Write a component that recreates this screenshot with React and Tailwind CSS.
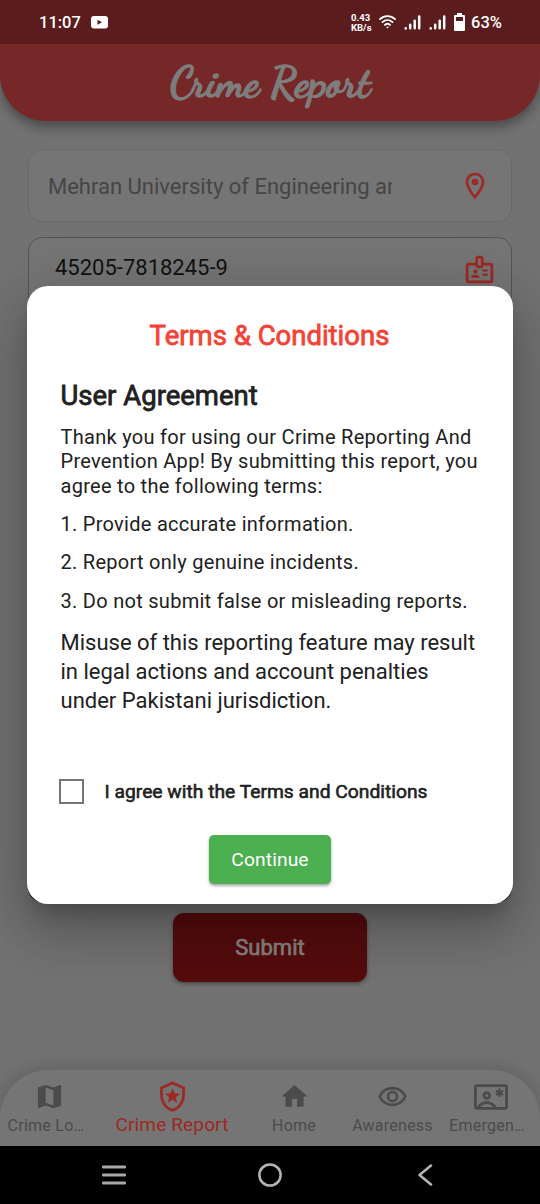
import React from "react";
import {
  MdMap,
  MdOutlineLocalPolice,
  MdHome,
  MdOutlineRemoveRedEye,
  MdOutlineContactEmergency,
  MdOutlineBadge,
  MdOutlineLocationOn,
} from "react-icons/md";

function Signal() {
  return (
    <svg width="17" height="15" viewBox="0 0 17 15" fill="none" stroke="white" strokeWidth="2.5" strokeLinecap="round">
      <path d="M1.7 13.3v.2M6.2 9.8v3.5M10.7 5.8v7.5M15.2 1.5v11.8" />
    </svg>
  );
}

function StatusBar() {
  return (
    <div className="flex h-11 shrink-0 items-center bg-[#5a1c1c] pl-[39px] pr-[38px] text-white">
      <span className="mt-[2px] w-[42px] whitespace-nowrap text-[16.5px] font-medium leading-5">11:07</span>
      <svg className="ml-[10px]" width="17" height="13" viewBox="0 0 17 13">
        <rect width="17" height="12.5" rx="3" fill="white" />
        <path d="M6.5 3.8v5l4.6-2.5z" fill="#5a1c1c" />
      </svg>
      <div className="ml-auto flex items-center">
        <div className="mt-[1px] w-[19px] whitespace-nowrap text-left text-[9.5px] font-bold leading-[10px]">
          <div>0.43</div>
          <div>KB/s</div>
        </div>
        <svg className="ml-[9px]" width="17" height="14" viewBox="0 0 17 14" fill="none" stroke="white" strokeWidth="1.9" strokeLinecap="round">
          <path d="M1 4.1C5.3.1 11.7.1 16 4.1M3.5 7.1c2.9-2.6 7.1-2.6 10 0M6 9.9c1.5-1.3 3.5-1.3 5 0" />
          <path d="M7 11.8h3L8.5 13.5z" fill="white" stroke="none" />
        </svg>
        <span className="ml-[8px]"><Signal /></span>
        <span className="ml-[8px]"><Signal /></span>
        <svg className="ml-[8px]" width="11" height="18" viewBox="0 0 11 18">
          <path fill="white" fillRule="evenodd" d="M3 0h5v2h2a1 1 0 0 1 1 1v14a1 1 0 0 1-1 1H1a1 1 0 0 1-1-1V3a1 1 0 0 1 1-1h2zM2 4v4h7V4z" />
        </svg>
        <span className="ml-[6px] mt-[2px] w-[31px] whitespace-nowrap text-[16.5px] font-medium leading-5">63%</span>
      </div>
    </div>
  );
}

const tabs = [
  { label: "Crime Lo…", Icon: MdMap, box: "w-[92px]", shift: "ml-[6px]" },
  { label: "Crime Report", Icon: MdOutlineLocalPolice, box: "w-[160px]", shift: "", active: true },
  { label: "Home", Icon: MdHome, box: "w-[84px]", shift: "" },
  { label: "Awareness", Icon: MdOutlineRemoveRedEye, box: "w-[113px]", shift: "" },
  { label: "Emergen…", Icon: MdOutlineContactEmergency, box: "w-[76px]", shift: "ml-[7px]", wide: true },
];

function TabBar() {
  return (
    <nav className="flex h-[76px] shrink-0 rounded-t-[48px] bg-[#757575] shadow-[0_0_20px_rgba(0,0,0,0.2)]">
      {tabs.map(({ label, Icon, box, shift, active, wide }) => (
        <div key={label} className={`${box} flex shrink-0 flex-col items-center ${active ? "text-[#9c2923]" : "text-[#4b4b4b]"}`}>
          <div className={`${shift} mt-[10px] h-[33px] ${active ? "" : "pt-[1px]"}`}>
            {active ? <Icon size={33} /> : wide ? <Icon size={34} className="mt-[-1px]" /> : <Icon size={31} />}
          </div>
          <span className={active ? "mt-[1px] whitespace-nowrap text-[19px] leading-[22px] tracking-[0.15px]" : "mt-[3px] whitespace-nowrap text-[16px] leading-5 tracking-[0.25px]"}>
            {label}
          </span>
        </div>
      ))}
    </nav>
  );
}

function SystemNav() {
  return (
    <div className="flex h-[58px] shrink-0 items-center bg-black pl-[102px] pr-[107px]">
      <svg width="24" height="20" viewBox="0 0 24 20" stroke="#a8a8a8" strokeWidth="2.8" strokeLinecap="round">
        <path d="M1.3 2h21.4M1.3 10h21.4M1.3 18h21.4" />
      </svg>
      <svg className="ml-[132px]" width="24" height="24" viewBox="0 0 24 24" fill="none" stroke="#b5b5b5" strokeWidth="2.5">
        <circle cx="12" cy="12" r="10.6" />
      </svg>
      <svg className="ml-auto" width="16" height="22" viewBox="0 0 16 22" fill="none" stroke="#b5b5b5" strokeWidth="2.5" strokeLinecap="round" strokeLinejoin="round">
        <path d="M14 1.5 2.5 11 14 20.5" />
      </svg>
    </div>
  );
}

function TermsDialog() {
  return (
    <div className="absolute left-[27px] top-[286px] flex h-[618px] w-[486px] flex-col rounded-[21px] bg-white text-[#212121] shadow-[0_15px_20px_-8px_rgba(0,0,0,0.22),0_30px_50px_4px_rgba(0,0,0,0.14),0_12px_60px_10px_rgba(0,0,0,0.12)]">
      <h1 className="mt-[34px] pr-[1px] text-center text-[27.5px] leading-8 text-[#f44336] [-webkit-text-stroke:0.8px_#f44336]">Terms &amp; Conditions</h1>
      <div className="ml-[33.5px] flex flex-col whitespace-nowrap">
        <h2 className="mt-[28px] text-[27.5px] leading-8 [-webkit-text-stroke:0.8px_#212121]">User Agreement</h2>
        <p className="mt-[12.5px] text-[20px] leading-[24.7px] tracking-[0.28px]">
          Thank you for using our Crime Reporting And<br />
          Prevention App! By submitting this report, you<br />
          agree to the following terms:
        </p>
        <ol className="mt-[13.4px] flex flex-col gap-[14.2px] text-[20px] leading-[24.3px] tracking-[0.28px]">
          <li>1. Provide accurate information.</li>
          <li>2. Report only genuine incidents.</li>
          <li>3. Do not submit false or misleading reports.</li>
        </ol>
        <p className="mt-[16px] text-[22px] leading-[28.8px]">
          Misuse of this reporting feature may result<br />
          in legal actions and account penalties<br />
          under Pakistani jurisdiction.
        </p>
      </div>
      <label className="ml-8 mt-[62.5px] flex h-[26px] items-center">
        <span className="h-[25px] w-[25px] border-[2.5px] border-[#757575]" />
        <span className="ml-[20.5px] mt-[1px] whitespace-nowrap text-[19.25px] leading-6 [-webkit-text-stroke:0.6px_#212121]">I agree with the Terms and Conditions</span>
      </label>
      <button className="ml-[182px] mt-[31px] flex h-[49px] w-[122px] items-center justify-center rounded-[5px] bg-[#4caf50] pt-[2px] text-[19.25px] tracking-[0.1px] text-white shadow-[0_2px_3px_rgba(0,0,0,0.35)]">
        Continue
      </button>
    </div>
  );
}

export default function App() {
  return (
    <div className="relative flex h-[1204px] w-[540px] flex-col overflow-hidden bg-[#727272] font-['Roboto',sans-serif]">
      <StatusBar />
      <header className="flex h-[77px] shrink-0 items-center justify-center rounded-b-[46px] bg-[#762727] shadow-[0_6px_12px_rgba(0,0,0,0.35)] [clip-path:inset(0_0_-30px_0)]">
        <span className="whitespace-nowrap font-['Satisfy','Dancing_Script',cursive] text-[42px] font-bold leading-10 text-[#7d7d7d] [-webkit-text-stroke:1.3px_#7d7d7d]">Crime Report</span>
      </header>
      <main className="flex min-h-0 grow flex-col px-7">
        <div className="mt-[28px] flex h-[73px] shrink-0 items-center rounded-[14px] border-[1.5px] border-[#6a6a6a] bg-[#757575] pl-[19px] pr-[20px]">
          <span className="mt-[1px] w-[344px] overflow-hidden whitespace-nowrap text-[22px] text-[#454545]">Mehran University of Engineering and</span>
          <MdOutlineLocationOn className="ml-auto text-[#9c2923]" size={32} />
        </div>
        <div className="mt-[15px] flex h-[74px] shrink-0 items-start rounded-[14px] border border-[#555] bg-[#757575] pl-[26px] pr-[15px]">
          <span className="mt-[13px] text-[22px] leading-[34px] text-[#111]">45205-7818245-9</span>
          <MdOutlineBadge className="ml-auto mt-[15px] text-[#9c2923]" size={33} />
        </div>
        <div className="mt-[490px] h-[101px] shrink-0 rounded-[14px] bg-[#1b1b1b]" />
        <button className="mt-[11px] flex h-[69px] w-[194px] shrink-0 items-center justify-center self-center rounded-[11px] bg-[#540c0d] text-[22px] text-[#878080] shadow-[0_2px_4px_rgba(0,0,0,0.35)] [-webkit-text-stroke:0.7px_#878080]">
          Submit
        </button>
      </main>
      <TabBar />
      <SystemNav />
      <TermsDialog />
    </div>
  );
}
